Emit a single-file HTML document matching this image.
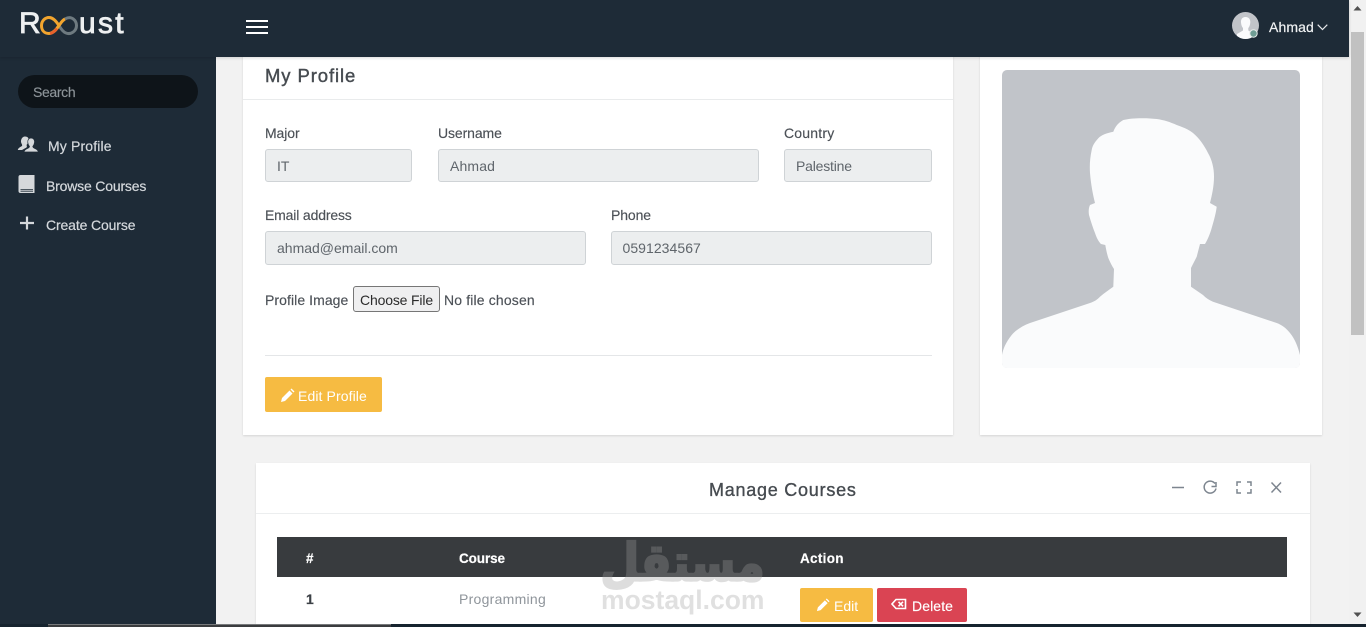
<!DOCTYPE html>
<html lang="en"><head><meta charset="utf-8"><title>My Profile</title>
<style>
html,body{margin:0;padding:0;width:1366px;height:627px;overflow:hidden;background:#f2f2f2}
body{position:relative;font-family:"Liberation Sans",sans-serif;font-size:14px;color:#4a4f55}
.a{position:absolute;white-space:nowrap}
.t{position:absolute;white-space:nowrap;line-height:20px}
.card{position:absolute;background:#fff;box-shadow:0 1px 2px rgba(0,0,0,.12)}
.in{position:absolute;box-sizing:border-box;background:#eceeef;border:1px solid #cfd3d6;border-radius:3px;color:#5f656b;line-height:32px;padding-left:11px}
.btn{position:absolute;border-radius:2px;color:#fff;white-space:nowrap;box-sizing:border-box}
.nav{color:#d4d8dc;-webkit-text-stroke:.2px #d4d8dc}
.lab{color:#4c5157;letter-spacing:-.1px;-webkit-text-stroke:.15px #4c5157}
.th{color:#fff;font-weight:700;font-size:13.5px;top:548px;-webkit-text-stroke:.2px #fff}
</style></head>
<body>
<!-- main cards -->
<div class="card" style="left:243px;top:40px;width:710px;height:395px"></div>
<div class="a" style="left:243px;top:99px;width:710px;height:1px;background:#e9ebec"></div>
<div class="t" style="left:265px;top:65px;font-size:18.5px;line-height:22px;color:#464b50;letter-spacing:.9px;-webkit-text-stroke:.4px #464b50">My Profile</div>

<div class="t lab" style="left:265px;top:123px">Major</div>
<div class="in" style="left:265px;top:149px;width:147px;height:33px">IT</div>
<div class="t lab" style="left:438px;top:123px">Username</div>
<div class="in" style="left:438px;top:149px;width:321px;height:33px;letter-spacing:.15px">Ahmad</div>
<div class="t lab" style="left:784px;top:123px;letter-spacing:.2px">Country</div>
<div class="in" style="left:784px;top:149px;width:148px;height:33px;letter-spacing:-.2px">Palestine</div>
<div class="t lab" style="left:265px;top:205px;letter-spacing:-.16px">Email address</div>
<div class="in" style="left:265px;top:231px;width:321px;height:34px;letter-spacing:0">ahmad@email.com</div>
<div class="t lab" style="left:611px;top:205px">Phone</div>
<div class="in" style="left:611px;top:231px;width:321px;height:34px;padding-left:10.5px;letter-spacing:.05px">0591234567</div>
<div class="t lab" style="left:265px;top:290px;letter-spacing:.07px">Profile Image</div>
<div class="a" style="left:353px;top:286px;width:87px;height:26px;box-sizing:border-box;background:#efeff0;border:1px solid #767676;border-radius:3px;text-align:center;line-height:26px;color:#2b2b2b;letter-spacing:-.16px">Choose File</div>
<div class="t lab" style="left:444px;top:290px;letter-spacing:.15px">No file chosen</div>
<div class="a" style="left:265px;top:355px;width:667px;height:1px;background:#e4e6e8"></div>
<div class="btn" style="left:265px;top:377px;width:117px;height:35px;background:#f6bb42;line-height:38px;padding-left:33px;letter-spacing:.1px">Edit Profile</div>
<svg class="a" style="left:280px;top:388px" width="15" height="15" viewBox="0 0 15 15"><path d="M1 14l1-4 7.500-7.500 3 3L5 13zM10.500 1.500l1-1 3 3-1 1z" fill="#fff"/></svg>

<div class="card" style="left:980px;top:40px;width:342px;height:395px"></div>
<svg class="a" style="left:1002px;top:70px" width="298" height="298" viewBox="1002 70 298 298">
<path d="M1007 70H1295a5 5 0 0 1 5 5V363a5 5 0 0 1-5 5H1007a5 5 0 0 1-5-5V75a5 5 0 0 1 5-5z" fill="#c1c4c9"/>
<path fill="#fafbfc" d="M1146.700 118.300C1137 118 1130 118.500 1123.300 120C1118 123 1115 127 1113.300 131.700C1107 133 1101 135 1098.300 138.300C1094 143 1092.500 146 1091.700 150C1090 158 1089.500 165 1090 173C1091 185 1093 195 1095 203L1090 205C1088.500 208 1088.500 212 1089 215C1091 222 1093 228 1095 233C1097 239 1099 242 1101 244L1105.300 245C1106 249 1107 254 1108.300 258C1110 262 1112 266 1114 269L1113.300 286.700C1109 290 1104 293 1100 296.700C1097 300 1094 301.500 1090 303L1030 323C1022 326 1016 330 1011.700 335C1006 342 1003 349 1002 355V363Q1002 368 1007 368H1295Q1300 368 1300 363V355C1298 347 1295 339 1290 333C1286 328 1282 325 1276.700 323L1213 301.700C1209 300 1206 298 1203 295L1191 286.700V268C1193 264 1195 260 1196.700 256.700L1200 244H1205C1207.500 240 1210 234 1211.700 228C1214 220 1216 213 1216.700 206.700L1210 203C1212 195 1214 186 1214 176.700C1214 168 1212 160 1208 153C1204 145 1199 138 1193 133C1188 129 1182 127 1176.700 125C1170 122 1164 120 1156.700 119Z"/>
</svg>

<!-- courses card -->
<div class="card" style="left:256px;top:463px;width:1054px;height:170px"></div>
<div class="a" style="left:256px;top:513px;width:1054px;height:1px;background:#eceeef"></div>
<div class="t" style="left:709px;top:479px;font-size:18px;line-height:22px;color:#464b50;letter-spacing:.75px;-webkit-text-stroke:.35px #464b50">Manage Courses</div>
<svg class="a" style="left:1165px;top:475px" width="125" height="24" viewBox="0 0 125 24" fill="none" stroke="#7d858f" stroke-width="1.500">
<path d="M7 12.500H19"/>
<path d="M50 8.500a6 6 0 1 0 1 5M51 7v4.500h-4.500" />
<path d="M72 11V7h4M82 7h4v4M86 14v4h-4M76 18h-4v-4"/>
<path d="M106.500 7.500l9.500 10M116 7.500l-9.500 10"/>
</svg>
<div class="a" style="left:277px;top:537px;width:1010px;height:40px;background:#383b3e"></div>
<div class="t th" style="left:306px;top:549px">#</div>
<div class="t th" style="left:459px;top:549px;letter-spacing:-.1px">Course</div>
<div class="t th" style="left:800px;top:549px;letter-spacing:.3px">Action</div>
<div class="t" style="left:306px;top:589px;color:#3c4146;font-weight:700;-webkit-text-stroke:.2px #3c4146">1</div>
<div class="t" style="left:459px;top:589px;color:#8f959b;letter-spacing:.27px">Programming</div>
<div class="btn" style="left:800px;top:588px;width:73px;height:34px;background:#f6bb42;line-height:37px;padding-left:34px">Edit</div>
<svg class="a" style="left:816px;top:598px" width="14" height="14" viewBox="0 0 15 15"><path d="M1 14l1-4 7.500-7.500 3 3L5 13zM10.500 1.500l1-1 3 3-1 1z" fill="#fff"/></svg>
<div class="btn" style="left:877px;top:588px;width:90px;height:34px;background:#da4453;line-height:37px;padding-left:35px;letter-spacing:.1px;-webkit-text-stroke:.15px #fff">Delete</div>
<svg class="a" style="left:891px;top:598px" width="16" height="13" viewBox="0 0 16 13" fill="none" stroke="#fff" stroke-width="1.600"><path d="M5 1.500H14.500V10.500H5L1 6z"/><path d="M7.500 3.800l4.500 4.500M12 3.800L7.500 8.300"/></svg>

<!-- watermark -->
<div class="a" dir="rtl" style="left:590px;top:523px;width:185px;text-align:center;font-family:'DejaVu Sans',sans-serif;font-weight:700;font-size:45px;line-height:80px;color:#9b9b9b;-webkit-text-stroke:2px #9b9b9b;opacity:.33;transform:scaleY(1.15)">مستقل</div>
<div class="a" style="left:601px;top:584px;font-weight:700;font-size:26.5px;line-height:32px;color:#9b9b9b;opacity:.3">mostaql.com</div>

<!-- scrollbar -->
<div class="a" style="left:1349px;top:0;width:17px;height:627px;background:#f1f1f1"></div>
<div class="a" style="left:1351px;top:32px;width:13px;height:303px;background:#c1c1c1"></div>
<svg class="a" style="left:1349px;top:0" width="17" height="627"><path d="M4.500 10.500L8.500 6l4 4.500z" fill="#505050"/><path d="M4.500 612.500L8.500 617l4-4.500z" fill="#505050"/></svg>

<!-- sidebar -->
<div class="a" style="left:0;top:0;width:216px;height:627px;background:#1e2b37"></div>
<div class="a" style="left:18px;top:75px;width:180px;height:33px;border-radius:17px;background:#0e1419"></div>
<div class="t" style="left:33px;top:82px;color:#8d9499;letter-spacing:-.35px;-webkit-text-stroke:.15px #8d9499">Search</div>
<svg class="a" style="left:17px;top:135px" width="22" height="19" viewBox="0 0 22 19" fill="#d5d8db"><path d="M8 1.500c3 0 4 2 3.500 4-.3 2-1 3.500-2 4.500.5 1 .5 2 0 2.500L5 15H.8c.4-2 2.500-3 4.200-4 .4-1 0-1.500-.5-2.500C3.800 7 3.800 5.500 4.500 4 5 2.500 6.500 1.500 8 1.500z"/><path d="M14 3c2.500 0 3.800 2 3.500 4.500-.2 1.800-1 3-1.700 4 .2 1 1 1.500 2.200 2 1.500.6 3 1.300 3.300 3.500H7c.3-2.200 2-3 3.300-3.500 1.200-.5 2-1 2.200-2-.8-1-1.500-2.200-1.700-4C10.500 5 11.700 3 14 3z" stroke="#1e2b37" stroke-width=".7"/></svg>
<div class="t nav" style="left:48px;top:136px;letter-spacing:.15px">My Profile</div>
<svg class="a" style="left:18px;top:175px" width="17" height="19" viewBox="0 0 17 19"><path d="M2.500 0H16.500V18H2.500Q.5 18 .5 16V2Q.5 0 2.500 0z" fill="#d5d8db"/><path d="M2.500 14.500H15M2.500 16.200H15" stroke="#1e2b37" stroke-width=".8"/></svg>
<div class="t nav" style="left:46px;top:176px;letter-spacing:-.18px">Browse Courses</div>
<svg class="a" style="left:20px;top:216px" width="14" height="14"><path d="M7 0.500V13.500M0 7H14" stroke="#d5d8db" stroke-width="2.200"/></svg>
<div class="t nav" style="left:46px;top:215px;letter-spacing:-.13px">Create Course</div>

<!-- top bar -->
<div class="a" style="left:0;top:0;width:1349px;height:57px;background:#1e2b37;box-shadow:0 1px 3px rgba(0,0,0,.15)"></div>
<div class="a" style="left:19px;top:5px;font-size:30px;line-height:38px;color:#eef0f1;-webkit-text-stroke:.8px #eef0f1">R</div>
<div class="a" style="left:79px;top:5px;font-size:30px;line-height:38px;color:#eef0f1;letter-spacing:2.300px;-webkit-text-stroke:.8px #eef0f1">ust</div>
<svg class="a" style="left:38px;top:12px" width="44" height="26" viewBox="0 0 44 26" fill="none" stroke-width="3">
<path d="M27 7C34 3 38.500 9 38.500 13.500C38.500 19 33 23 28 21C25 20 23 17 21 13.500" stroke="#6e7a80"/>
<path d="M27 7C24 8.500 23 11 21 13.500C18 18 15 21.500 11 21.500C6 21.500 3.500 18 3.500 13.500C3.500 9 7 5.500 11 5.500C15 5.500 18 9 21 13.500" stroke="#f2a52e"/>
<path d="M19 16.500C17 19 15 21 12 21.500" stroke="#e8612c"/>
</svg>
<svg class="a" style="left:246px;top:19px" width="22" height="16"><path d="M0 2H22M0 8H22M0 14H22" stroke="#fff" stroke-width="2"/></svg>
<svg class="a" style="left:1232px;top:12px" width="28" height="28" viewBox="0 0 28 28"><defs><clipPath id="c"><circle cx="13.500" cy="13.500" r="13.500"/></clipPath></defs><circle cx="13.500" cy="13.500" r="13.500" fill="#c1c4c9"/><path clip-path="url(#c)" d="M13.500 5c3.500 0 5 2.500 4.800 5.500-.2 2.500-1 4.500-2 5.500v2.500l6 3.500V27H5v-5l6-3.500V16c-1-1-1.800-3-2-5.500C8.800 7.500 10 5 13.500 5z" fill="#fafbfc"/><circle cx="21.500" cy="21.500" r="3.700" fill="#6f9d94" stroke="#e6ece9" stroke-width="1"/></svg>
<div class="t" style="left:1269px;top:17px;color:#f0f2f3;font-size:14px;letter-spacing:.1px;-webkit-text-stroke:.2px #f0f2f3">Ahmad</div>
<svg class="a" style="left:1317px;top:24px" width="11" height="7"><path d="M.7.700L5.500 5.500 10.300.700" fill="none" stroke="#e6e8ea" stroke-width="1.200"/></svg>

<!-- bottom taskbar strip -->
<div class="a" style="left:0;top:624px;width:1366px;height:3px;background:#16232e"></div>
<div class="a" style="left:48px;top:624px;width:343px;height:3px;background:#3a3c3e;border-top:1px solid #77797b;box-sizing:border-box"></div>
</body></html>
